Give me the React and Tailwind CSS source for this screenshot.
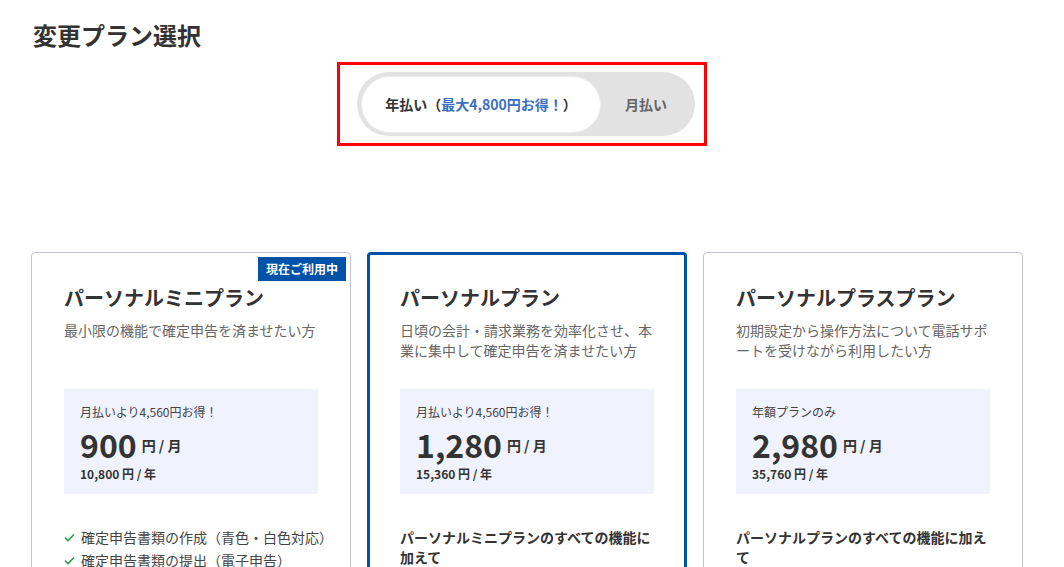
const plans = [
  {
    name: "パーソナルミニプラン",
    desc: "最小限の機能で確定申告を済ませたい方",
    note: "月払いより4,560円お得！",
    price: "900",
    annual: "10,800 円 / 年",
    current: true,
    features: ["確定申告書類の作成（青色・白色対応）", "確定申告書類の提出（電子申告）"],
  },
  {
    name: "パーソナルプラン",
    desc: "日頃の会計・請求業務を効率化させ、本業に集中して確定申告を済ませたい方",
    note: "月払いより4,560円お得！",
    price: "1,280",
    annual: "15,360 円 / 年",
    selected: true,
    lead: "パーソナルミニプランのすべての機能に加えて",
  },
  {
    name: "パーソナルプラスプラン",
    desc: "初期設定から操作方法について電話サポートを受けながら利用したい方",
    note: "年額プランのみ",
    price: "2,980",
    annual: "35,760 円 / 年",
    lead: "パーソナルプランのすべての機能に加えて",
  },
];

const Check = () => (
  <svg width="11" height="9" viewBox="0 0 11 9" className="shrink-0">
    <path d="M1 4.5 L4 7.5 L10 1.5" fill="none" stroke="#2e9a4c" strokeWidth="1.6" />
  </svg>
);

const PlanCard = ({ plan }) => (
  <div
    className={
      plan.selected
        ? "relative rounded-[4px] border-[3px] border-[#0052a8] bg-white px-[30px] pt-[28px]"
        : "relative rounded-[4px] border border-[#c4c5d0] bg-white px-[32px] pt-[30px]"
    }
  >
    {plan.current && (
      <div className="absolute right-[4px] top-[4px] flex h-[24px] w-[88px] items-center justify-center bg-[#0052a8] text-[12px] font-bold text-white">
        現在ご利用中
      </div>
    )}
    <h2 className="text-[20px] font-bold leading-[30px] text-[#333]">{plan.name}</h2>
    <p className="mt-[7px] min-h-[40px] text-[14px] leading-[20px] text-[#666]">{plan.desc}</p>
    <div className="mt-[29px] h-[105px] bg-[#f0f3fe] px-[16px] pt-[14px]">
      <p className="text-[12px] leading-[18px] text-[#444]">{plan.note}</p>
      <div className="flex h-[44px] items-center gap-[5px] pt-[2px] text-[#333]">
        <span className="text-[32px] font-bold leading-[40px]">{plan.price}</span>
        <span className="mt-[2px] text-[14px] font-bold">円 / 月</span>
      </div>
      <p className="text-[12px] font-bold leading-[18px] text-[#333]">{plan.annual}</p>
    </div>
    {plan.features && (
      <ul className="mt-[32px] flex flex-col">
        {plan.features.map((f) => (
          <li
            key={f}
            className="flex items-center gap-[6px] whitespace-nowrap text-[14px] leading-[23px] text-[#444]"
          >
            <Check />
            {f}
          </li>
        ))}
      </ul>
    )}
    {plan.lead && (
      <p className="mt-[33px] text-[14px] font-bold leading-[20px] text-[#333]">{plan.lead}</p>
    )}
  </div>
);

export default function App() {
  return (
    <div
      className="h-[567px] overflow-hidden bg-white pt-[17px]"
      style={{ fontFamily: '"Noto Sans CJK JP", "Noto Sans", sans-serif' }}
    >
      <div className="w-[992px] ml-[31px]">
        <h1 className="pl-[2px] text-[24px] font-bold leading-[36px] text-[#333]">変更プラン選択</h1>
        <div className="mt-[9px] flex pl-[306px]">
          <div className="border-[3px] border-[#f00] pl-[17px] pr-[9px] py-[7px]">
            <div className="flex h-[64px] w-[338px] items-center rounded-full bg-[#e2e2e2] p-[4px]">
              <div className="flex h-[57px] w-[240px] items-center justify-center rounded-full border border-[#ececec] bg-white text-[14px] font-bold text-[#333]">
                年払い（<span className="text-[#3a6fc2]">最大4,800円お得！</span>）
              </div>
              <div className="flex-1 text-center text-[14px] font-bold text-[#666]">月払い</div>
            </div>
          </div>
        </div>
        <div className="mt-[106px] grid grid-cols-3 gap-[16px]">
          {plans.map((p) => (
            <PlanCard key={p.name} plan={p} />
          ))}
        </div>
      </div>
    </div>
  );
}
